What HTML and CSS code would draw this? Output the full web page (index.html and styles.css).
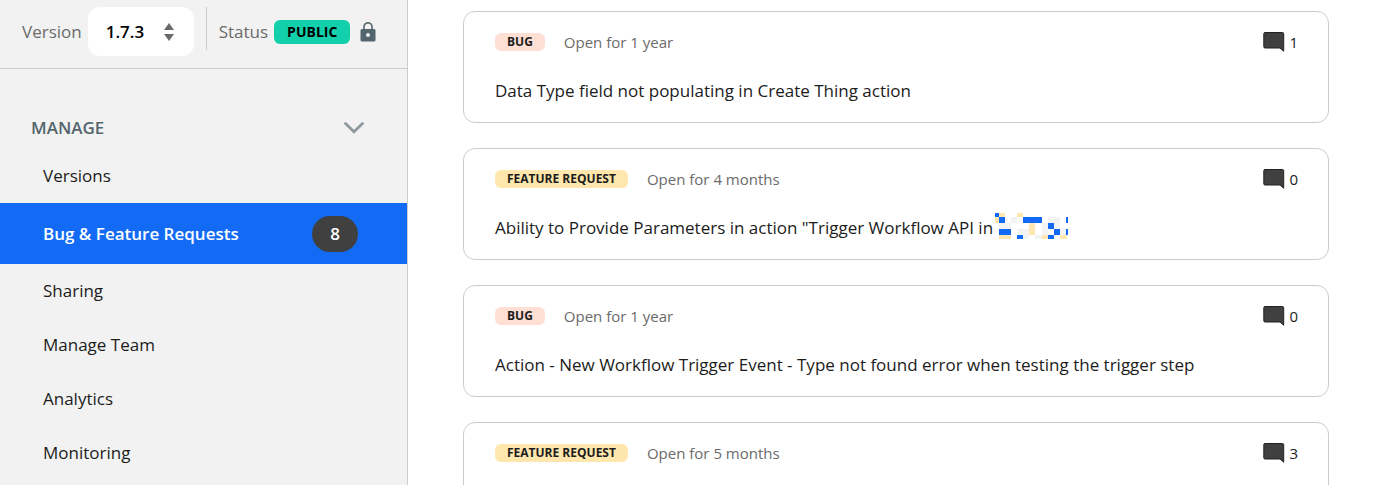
FILE: index.html
```html
<!DOCTYPE html>
<html lang="en">
<head>
<meta charset="utf-8">
<meta name="viewport" content="width=device-width, initial-scale=1">
<title>Bug &amp; Feature Requests</title>
<link rel="stylesheet" href="styles.css">
</head>
<body>
<svg class="sprite" aria-hidden="true">
  <symbol id="comment" viewBox="0 0 22 20">
    <path d="M2 .5h17.500a1.200 1.200 0 0 1 1.200 1.200V19.200L17 16H2A1.200 1.200 0 0 1 .8 14.800V1.700A1.200 1.200 0 0 1 2 .5z" fill="#404040" stroke="#222" stroke-width="1"/>
  </symbol>
</svg>
<div class="layout">
  <aside class="sidebar">
    <div class="toolbar">
      <div class="version">
        <label class="label" for="version">Version</label>
        <div class="picker">
          <select class="picker-select" id="version"><option>1.7.3</option></select>
          <svg class="picker-icon" viewBox="0 0 10 18" aria-hidden="true"><path d="M5 0l5 7H0zM5 18l5-7H0z" fill="#6b6b6b"/></svg>
        </div>
      </div>
      <div class="status">
        <span class="label">Status</span>
        <span class="public">PUBLIC</span>
        <svg class="lock" viewBox="0 0 16 20" aria-hidden="true">
          <path d="M4 8V4.800a4 4 0 0 1 8 0V8" fill="none" stroke="#5f6f76" stroke-width="1.700"/>
          <rect x=".5" y="7" width="15" height="12.500" rx="1.500" fill="#54656d"/>
          <circle cx="8" cy="13" r="2" fill="#f2f2f2"/>
        </svg>
      </div>
    </div>
    <nav class="nav">
      <button class="nav-heading" type="button" aria-expanded="true">MANAGE
        <svg class="chevron" viewBox="0 0 20 12" aria-hidden="true"><path d="M1.500 1.500L10 9.800l8.500-8.300" fill="none" stroke="#8e999e" stroke-width="2.800" stroke-linecap="round"/></svg>
      </button>
      <a class="nav-item" href="#versions">Versions</a>
      <a class="nav-item active" href="#requests" aria-current="page">Bug &amp; Feature Requests <span class="count">8</span></a>
      <a class="nav-item" href="#sharing">Sharing</a>
      <a class="nav-item" href="#team">Manage Team</a>
      <a class="nav-item" href="#analytics">Analytics</a>
      <a class="nav-item" href="#monitoring">Monitoring</a>
    </nav>
  </aside>
  <main class="requests">
    <article class="card">
      <div class="meta">
        <span class="tag bug">BUG</span><span class="age">Open for 1 year</span>
        <span class="comments"><svg class="comment-icon" role="img" aria-label="Comments"><use href="#comment"/></svg>1</span>
      </div>
      <h2 class="title">Data Type field not populating in Create Thing action</h2>
    </article>
    <article class="card">
      <div class="meta">
        <span class="tag feature">FEATURE REQUEST</span><span class="age">Open for 4 months</span>
        <span class="comments"><svg class="comment-icon" role="img" aria-label="Comments"><use href="#comment"/></svg>0</span>
      </div>
      <h2 class="title">Ability to Provide Parameters in action "Trigger Workflow API in<svg class="redacted" viewBox="0 0 73 26" shape-rendering="crispEdges" aria-hidden="true">
        <path fill="#f3f3f3" d="M4 10h12v6H4zM16 4h6v6h-6zM28 4h12v6H28zM22 16h12v6H22zM34 10h6v6h-6zM47 10h6v6h-6zM53 4h12v6H53zM59 10h6v6h-6zM65 16h7v6h-7zM47 16h6v6h-6zM40 22h7v4h-7zM28 22h6v4h-6z"/>
        <path fill="#ffe7b0" d="M4 0h6v4H4zM22 0h6v4h-6zM0 4h4v6H0zM34 10h6v12h-6zM4 22h12v4H4zM47 22h6v4h-6zM65 22h7v4h-7z"/>
        <path fill="#136bf5" d="M0 0h4v4H0zM4 4h6v6H4zM4 16h12v6H4zM28 4h19v6H28zM22 22h6v4h-6zM53 10h6v6h-6zM59 16h6v6h-6zM53 22h6v4h-6zM71 4h2v6h-2zM71 16h2v6h-2z"/>
      </svg></h2>
    </article>
    <article class="card">
      <div class="meta">
        <span class="tag bug">BUG</span><span class="age">Open for 1 year</span>
        <span class="comments"><svg class="comment-icon" role="img" aria-label="Comments"><use href="#comment"/></svg>0</span>
      </div>
      <h2 class="title">Action - New Workflow Trigger Event - Type not found error when testing the trigger step</h2>
    </article>
    <article class="card">
      <div class="meta">
        <span class="tag feature">FEATURE REQUEST</span><span class="age">Open for 5 months</span>
        <span class="comments"><svg class="comment-icon" role="img" aria-label="Comments"><use href="#comment"/></svg>3</span>
      </div>
    </article>
  </main>
</div>
</body>
</html>
```

FILE: styles.css
```css
* {
  box-sizing: border-box;
}

body {
  margin: 0;
  font-family: "Open Sans", "Noto Sans", sans-serif;
  font-size: 17px;
  line-height: 24px;
  color: #1c1c1c;
  background: #fff;
}

.sprite {
  position: absolute;
  width: 0;
  height: 0;
}

.layout {
  display: flex;
  height: 100vh;
  overflow: hidden;
}

.sidebar {
  flex: 0 0 408px;
  background: #f2f2f2;
  border-right: 1px solid #ccc;
}

.toolbar {
  display: flex;
  gap: 12px;
  padding: 7px 28px 12px 22px;
  border-bottom: 1px solid #ccc;
}

.version,
.status {
  display: flex;
  align-items: center;
  gap: 6px;
}

.status {
  height: 43px;
  padding: 6px 0 0 12px;
  border-left: 1px solid #ccc;
}

.label {
  color: #6b6b6b;
}

.picker {
  position: relative;
}

.picker-select {
  appearance: none;
  width: 106px;
  height: 49px;
  padding: 0 18px;
  border: 0;
  border-radius: 12px;
  background: #fff;
  color: #000;
  font: 600 17px/24px "Open Sans", "Noto Sans", sans-serif;
}

.picker-icon {
  position: absolute;
  top: 16px;
  right: 20px;
  width: 10px;
  height: 18px;
  pointer-events: none;
}

.public {
  padding: 0 13px;
  border-radius: 6px;
  background: #13d0ac;
  color: #000;
  font-size: 14px;
  font-weight: 700;
}

.lock {
  width: 16px;
  height: 20px;
  margin-left: 4px;
}

.nav {
  padding-top: 38px;
}

.nav-heading {
  display: flex;
  align-items: center;
  justify-content: space-between;
  width: 100%;
  height: 42px;
  padding: 0 43px 0 31px;
  border: 0;
  background: none;
  color: #54656d;
  font: 600 17px/24px "Open Sans", "Noto Sans", sans-serif;
}

.chevron {
  width: 20px;
  height: 12px;
}

.nav-item {
  display: flex;
  align-items: center;
  justify-content: space-between;
  height: 54px;
  padding: 0 49px 0 43px;
  color: #1c1c1c;
  text-decoration: none;
}

.nav-item.active {
  height: 61px;
  background: #136bf5;
  color: #fff;
  font-weight: 600;
}

.count {
  width: 46px;
  border-radius: 18px;
  background: #404040;
  line-height: 36px;
  text-align: center;
}

.requests {
  flex: 1;
  display: flex;
  flex-direction: column;
  gap: 25px;
  min-width: 0;
  padding: 11px 71px 0 55px;
}

.card {
  flex: none;
  min-height: 112px;
  padding: 18px 30px 18px 31px;
  border: 1px solid #ccc;
  border-radius: 12px;
}

.meta {
  display: flex;
  align-items: center;
  gap: 19px;
  font-size: 15px;
}

.tag {
  padding: 0 12px;
  border-radius: 6px;
  font-size: 12px;
  font-weight: 700;
  line-height: 18px;
}

.bug {
  background: #ffdfd4;
}

.feature {
  background: #ffe6ac;
}

.age {
  color: #6b6b6b;
}

.comments {
  display: flex;
  align-items: center;
  gap: 4px;
  margin-left: auto;
}

.comment-icon {
  width: 22px;
  height: 20px;
}

.title {
  margin: 25px 0 0;
  font-size: 17px;
  font-weight: 400;
}

.redacted {
  width: 73px;
  height: 26px;
  margin: -7px 0 -1px 2px;
  vertical-align: middle;
}
```
